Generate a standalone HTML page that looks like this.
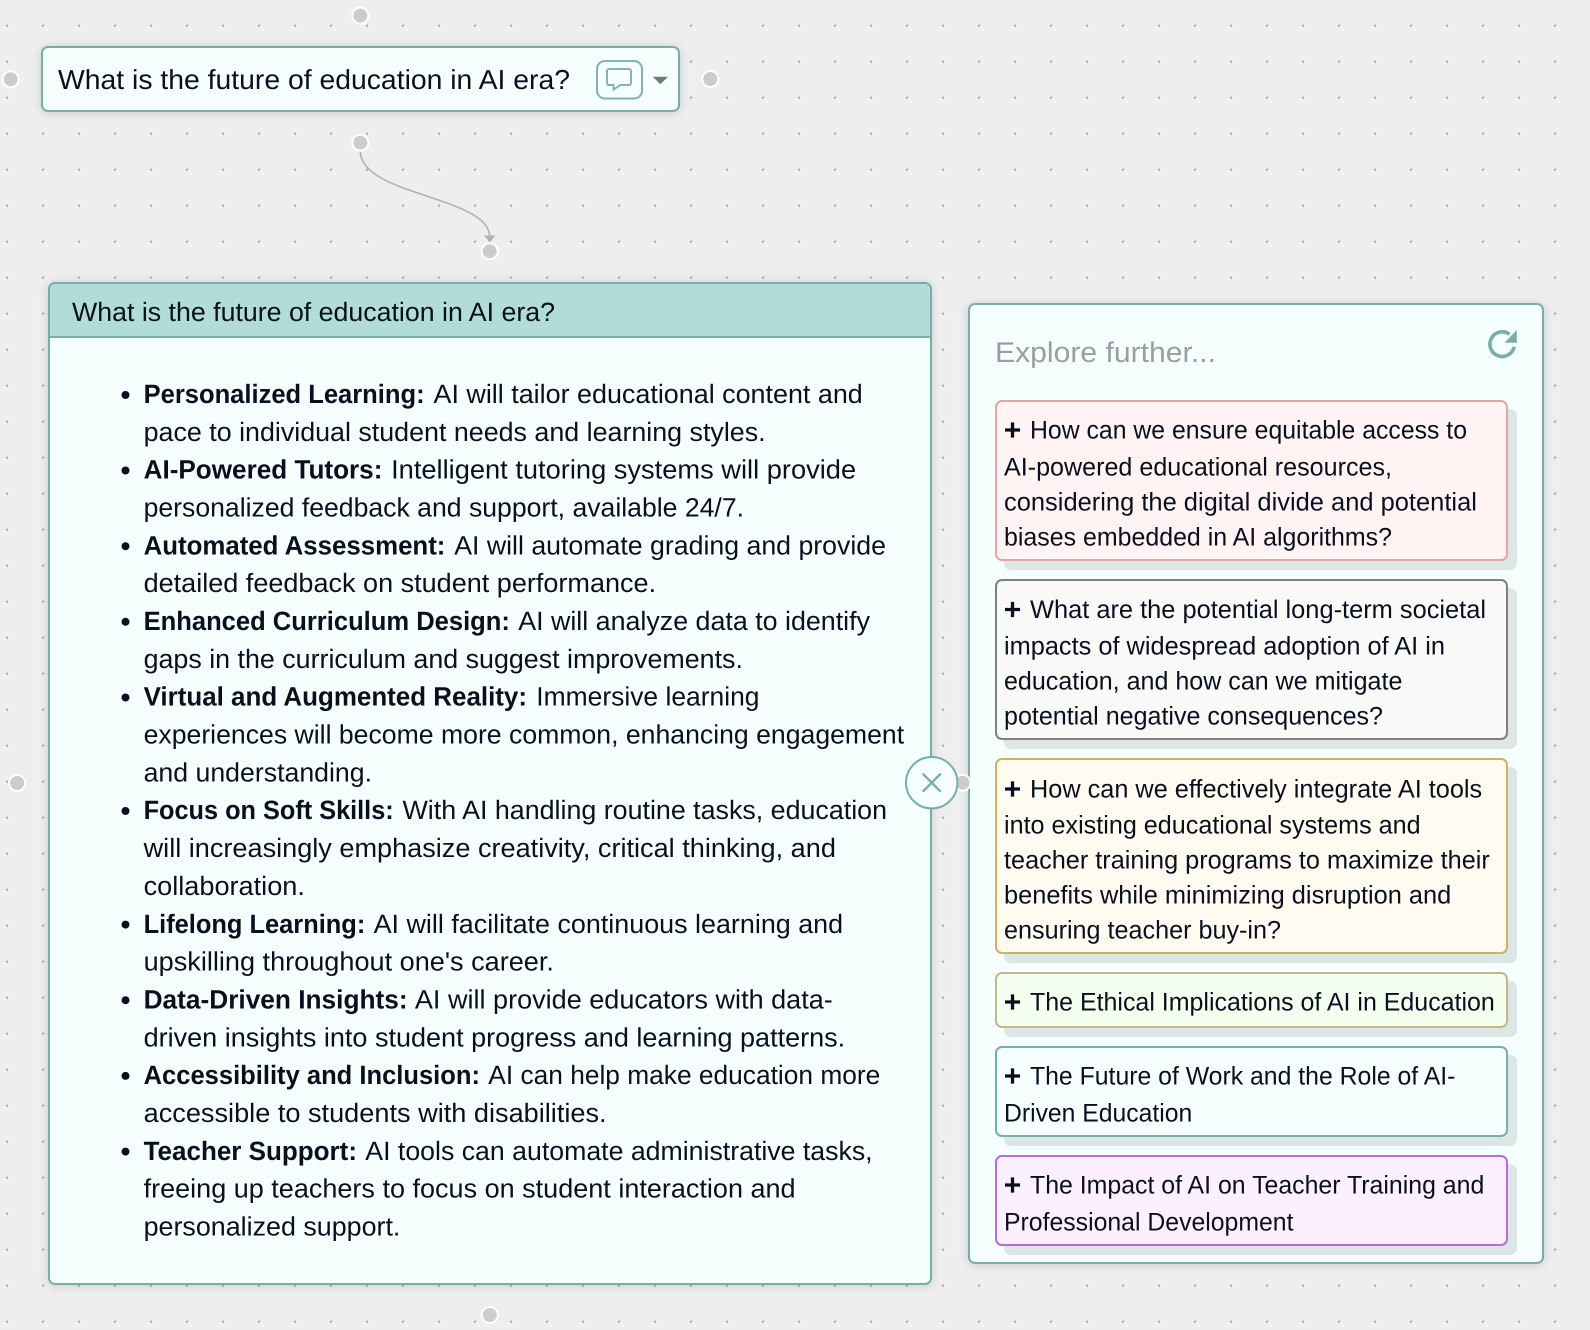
<!DOCTYPE html>
<html lang="en">
<head>
<meta charset="utf-8">
<title>What is the future of education in AI era?</title>
<style>
html,body{margin:0;padding:0;width:1590px;height:1330px;overflow:hidden;background:#eeeeee}
body{position:relative;font-family:"Liberation Sans",sans-serif}
#bg{position:absolute;left:0;top:0;width:1590px;height:1330px;background-color:#eeeeee;background-image:radial-gradient(circle,#a8a8a8 0.9px,rgba(168,168,168,0) 1.4px);background-size:36px 36px;background-position:-11px 7.67px}
.box{position:absolute;box-sizing:border-box;border:2px solid #78aea7;background:#f4fffe;border-radius:7px;box-shadow:0 1px 10px rgba(0,0,0,.14)}
.head{position:absolute;left:0;top:0;right:0;height:52px;background:#b2dcd7;border-bottom:2px solid #78aea7;border-radius:5px 5px 0 0}
.card{position:absolute;left:995px;width:512.5px;box-sizing:border-box;border:2px solid;border-radius:7px;box-shadow:9px 9px 0 #dbe6e5}
svg{position:absolute;left:0;top:0}
text{fill:#0a0f1e;font-family:"Liberation Sans",sans-serif;text-rendering:geometricPrecision;white-space:pre}
.l{transform:translate(-0.4px,0.7px)}
.l text{font-size:26.5px}
.l .b{font-weight:700}
.c text{font-size:25.5px}
.c .p{font-size:30px;font-weight:700}
.h{fill:#cccccc;stroke:#ffffff;stroke-width:2}
</style>
</head>
<body>
<div id="bg"></div>
<div class="box" style="left:41px;top:46px;width:639px;height:65.5px"></div>
<div class="box" style="left:48px;top:282px;width:884px;height:1003px"><div class="head"></div></div>
<div class="box" style="left:968px;top:302.5px;width:575.5px;height:961px"></div>
<div class="card" style="top:400px;height:161px;background:#fff4f3;border-color:#e0a6a6"></div>
<div class="card" style="top:579px;height:160.5px;background:#f9f9f8;border-color:#808080"></div>
<div class="card" style="top:758px;height:196px;background:#fffbf0;border-color:#cfb161"></div>
<div class="card" style="top:972px;height:55.5px;background:#f4fff0;border-color:#bdb98a"></div>
<div class="card" style="top:1046px;height:90.5px;background:#f4fffe;border-color:#78aea7"></div>
<div class="card" style="top:1155px;height:90.5px;background:#fcf0fe;border-color:#b56fd4"></div>

<svg width="1590" height="1330" viewBox="0 0 1590 1330" xmlns="http://www.w3.org/2000/svg">
<!-- connector -->
<path d="M360.3 151C360.3 196 489.7 196 489.7 237" fill="none" stroke="#b1b1b7" stroke-width="1.6"/>
<path d="M484 235.5H495.4L489.8 242.5Z" fill="#b1b1b7"/>
<!-- handles -->
<circle class="h" cx="360.3" cy="15.7" r="8"/>
<circle class="h" cx="10.7" cy="79.3" r="8"/>
<circle class="h" cx="710.3" cy="79" r="8"/>
<circle class="h" cx="360.3" cy="142.7" r="8"/>
<circle class="h" cx="489.7" cy="251.3" r="8"/>
<circle class="h" cx="17.2" cy="783" r="8"/>
<circle class="h" cx="489.8" cy="1315" r="8"/>
<circle class="h" cx="962.5" cy="782.7" r="8"/>

<!-- top node -->
<text x="58" y="88.8" font-size="27.5" textLength="512" lengthAdjust="spacingAndGlyphs">What is the future of education in AI era?</text>
<rect x="597" y="61" width="45" height="37.5" rx="8" fill="none" stroke="#7fb3ab" stroke-width="2"/>
<path d="M609 69H629a2 2 0 0 1 2 2V83a2 2 0 0 1-2 2H620.5L613.5 89.5V85H609a2 2 0 0 1-2-2V71a2 2 0 0 1 2-2Z" fill="none" stroke="#7fb3ab" stroke-width="1.9"/>
<path d="M652.7 76.7H668L660.3 84.2Z" fill="#777777"/>

<!-- left panel -->
<text x="72" y="321.2" font-size="26.5" textLength="483" lengthAdjust="spacingAndGlyphs">What is the future of education in AI era?</text>
<g fill="#0a0f1e">
<circle cx="125.5" cy="395" r="4"/><circle cx="125.5" cy="470.5" r="4"/><circle cx="125.5" cy="546.2" r="4"/><circle cx="125.5" cy="621.8" r="4"/><circle cx="125.5" cy="697.5" r="4"/><circle cx="125.5" cy="811" r="4"/><circle cx="125.5" cy="924.6" r="4"/><circle cx="125.5" cy="1000.2" r="4"/><circle cx="125.5" cy="1075.9" r="4"/><circle cx="125.5" cy="1151.6" r="4"/>
</g>
<g class="l">
<text class="b" x="144" y="402.3" textLength="281" lengthAdjust="spacingAndGlyphs">Personalized Learning:</text>
<text x="433.9" y="402.3" textLength="429.3" lengthAdjust="spacingAndGlyphs">AI will tailor educational content and</text>
<text x="144" y="440.1" textLength="622" lengthAdjust="spacingAndGlyphs">pace to individual student needs and learning styles.</text>
<text class="b" x="144" y="478" textLength="238.8" lengthAdjust="spacingAndGlyphs">AI-Powered Tutors:</text>
<text x="391.5" y="478" textLength="465" lengthAdjust="spacingAndGlyphs">Intelligent tutoring systems will provide</text>
<text x="144" y="515.8" textLength="600.4" lengthAdjust="spacingAndGlyphs">personalized feedback and support, available 24/7.</text>
<text class="b" x="144" y="553.7" textLength="301.8" lengthAdjust="spacingAndGlyphs">Automated Assessment:</text>
<text x="454.6" y="553.7" textLength="431.8" lengthAdjust="spacingAndGlyphs">AI will automate grading and provide</text>
<text x="144" y="591.5" textLength="512.5" lengthAdjust="spacingAndGlyphs">detailed feedback on student performance.</text>
<text class="b" x="144" y="629.3" textLength="366.3" lengthAdjust="spacingAndGlyphs">Enhanced Curriculum Design:</text>
<text x="518.6" y="629.3" textLength="351.8" lengthAdjust="spacingAndGlyphs">AI will analyze data to identify</text>
<text x="144" y="667.2" textLength="599.3" lengthAdjust="spacingAndGlyphs">gaps in the curriculum and suggest improvements.</text>
<text class="b" x="144" y="705" textLength="383.4" lengthAdjust="spacingAndGlyphs">Virtual and Augmented Reality:</text>
<text x="536.7" y="705" textLength="223.2" lengthAdjust="spacingAndGlyphs">Immersive learning</text>
<text x="144" y="742.9" textLength="760.5" lengthAdjust="spacingAndGlyphs">experiences will become more common, enhancing engagement</text>
<text x="144" y="780.7" textLength="228.4" lengthAdjust="spacingAndGlyphs">and understanding.</text>
<text class="b" x="144" y="818.5" textLength="250.1" lengthAdjust="spacingAndGlyphs">Focus on Soft Skills:</text>
<text x="402.9" y="818.5" textLength="484.5" lengthAdjust="spacingAndGlyphs">With AI handling routine tasks, education</text>
<text x="144" y="856.4" textLength="692.3" lengthAdjust="spacingAndGlyphs">will increasingly emphasize creativity, critical thinking, and</text>
<text x="144" y="894.2" textLength="161.3" lengthAdjust="spacingAndGlyphs">collaboration.</text>
<text class="b" x="144" y="932.1" textLength="221.7" lengthAdjust="spacingAndGlyphs">Lifelong Learning:</text>
<text x="374" y="932.1" textLength="469.5" lengthAdjust="spacingAndGlyphs">AI will facilitate continuous learning and</text>
<text x="144" y="969.9" textLength="410.3" lengthAdjust="spacingAndGlyphs">upskilling throughout one's career.</text>
<text class="b" x="144" y="1007.7" textLength="264" lengthAdjust="spacingAndGlyphs">Data-Driven Insights:</text>
<text x="415.3" y="1007.7" textLength="417.9" lengthAdjust="spacingAndGlyphs">AI will provide educators with data-</text>
<text x="144" y="1045.6" textLength="701.6" lengthAdjust="spacingAndGlyphs">driven insights into student progress and learning patterns.</text>
<text class="b" x="144" y="1083.4" textLength="336.4" lengthAdjust="spacingAndGlyphs">Accessibility and Inclusion:</text>
<text x="488.7" y="1083.4" textLength="392" lengthAdjust="spacingAndGlyphs">AI can help make education more</text>
<text x="144" y="1121.3" textLength="463" lengthAdjust="spacingAndGlyphs">accessible to students with disabilities.</text>
<text class="b" x="144" y="1159.1" textLength="213.4" lengthAdjust="spacingAndGlyphs">Teacher Support:</text>
<text x="365.7" y="1159.1" textLength="507.3" lengthAdjust="spacingAndGlyphs">AI tools can automate administrative tasks,</text>
<text x="144" y="1196.9" textLength="652" lengthAdjust="spacingAndGlyphs">freeing up teachers to focus on student interaction and</text>
<text x="144" y="1234.8" textLength="256.8" lengthAdjust="spacingAndGlyphs">personalized support.</text>
</g>

<!-- close button -->
<circle cx="931.7" cy="782.7" r="25.7" fill="#f4fffe" stroke="#78aea7" stroke-width="2"/>
<path d="M922.7 773.7L940.7 791.7M940.7 773.7L922.7 791.7" fill="none" stroke="#78aea7" stroke-width="2.4"/>

<!-- right panel -->
<text x="995" y="362" font-size="28.5" textLength="221" lengthAdjust="spacingAndGlyphs" style="fill:#9a9e9e">Explore further...</text>
<path d="M1514.2 346.8A12.3 12.3 0 1 1 1509.5 334.3" fill="none" stroke="#78aea7" stroke-width="3.6"/>
<path d="M1516.8 330V342.8H1504.5Z" fill="#78aea7"/>

<g class="c">
<text class="p" x="1003.8" y="440">+</text>
<text x="1030" y="438.4" textLength="437" lengthAdjust="spacingAndGlyphs">How can we ensure equitable access to</text>
<text x="1004" y="475.3" textLength="388" lengthAdjust="spacingAndGlyphs">AI-powered educational resources,</text>
<text x="1004" y="510.3" textLength="472.9" lengthAdjust="spacingAndGlyphs">considering the digital divide and potential</text>
<text x="1004" y="545.3" textLength="388" lengthAdjust="spacingAndGlyphs">biases embedded in AI algorithms?</text>

<text class="p" x="1003.8" y="619.5">+</text>
<text x="1030" y="617.8" textLength="456" lengthAdjust="spacingAndGlyphs">What are the potential long-term societal</text>
<text x="1004" y="654.3" textLength="441" lengthAdjust="spacingAndGlyphs">impacts of widespread adoption of AI in</text>
<text x="1004" y="689.3" textLength="398.4" lengthAdjust="spacingAndGlyphs">education, and how can we mitigate</text>
<text x="1004" y="724.3" textLength="379" lengthAdjust="spacingAndGlyphs">potential negative consequences?</text>

<text class="p" x="1003.8" y="799">+</text>
<text x="1030" y="797.3" textLength="452.2" lengthAdjust="spacingAndGlyphs">How can we effectively integrate AI tools</text>
<text x="1004" y="833.5" textLength="416.6" lengthAdjust="spacingAndGlyphs">into existing educational systems and</text>
<text x="1004" y="868.5" textLength="485.8" lengthAdjust="spacingAndGlyphs">teacher training programs to maximize their</text>
<text x="1004" y="903.5" textLength="447.3" lengthAdjust="spacingAndGlyphs">benefits while minimizing disruption and</text>
<text x="1004" y="938.5" textLength="277" lengthAdjust="spacingAndGlyphs">ensuring teacher buy-in?</text>

<text class="p" x="1003.8" y="1012.2">+</text>
<text x="1030" y="1010.5" textLength="464.8" lengthAdjust="spacingAndGlyphs">The Ethical Implications of AI in Education</text>

<text class="p" x="1003.8" y="1086.2">+</text>
<text x="1030" y="1084.5" textLength="425.4" lengthAdjust="spacingAndGlyphs">The Future of Work and the Role of AI-</text>
<text x="1004" y="1121.3" textLength="188.2" lengthAdjust="spacingAndGlyphs">Driven Education</text>

<text class="p" x="1003.8" y="1195.2">+</text>
<text x="1030" y="1193.5" textLength="454.3" lengthAdjust="spacingAndGlyphs">The Impact of AI on Teacher Training and</text>
<text x="1004" y="1230.3" textLength="289.5" lengthAdjust="spacingAndGlyphs">Professional Development</text>
</g>
</svg>
</body>
</html>
